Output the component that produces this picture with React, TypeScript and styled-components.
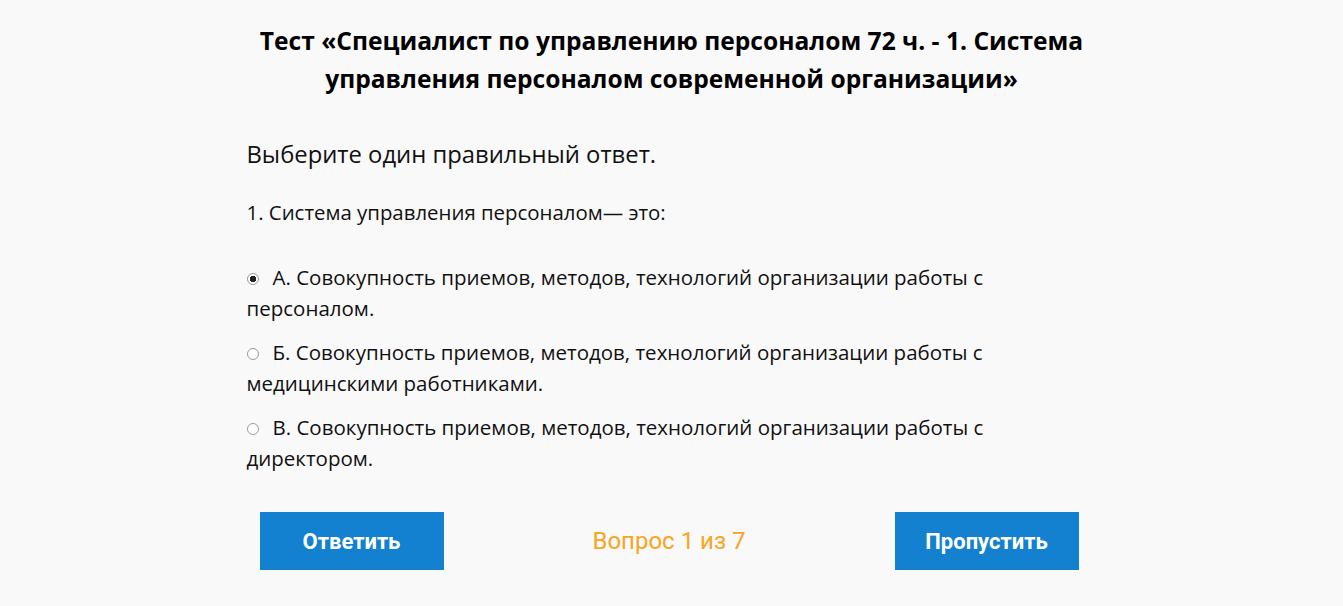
import {useState} from 'react';
import styled, {createGlobalStyle} from 'styled-components';

const GlobalStyle = createGlobalStyle`
  body {
    margin: 0;
    background: #f9f9f9;
    font-family: "Open Sans", "Noto Sans", sans-serif;
    color: #111;
  }
`;

const answers = [
  {id: 'a', text: 'А. Совокупность приемов, методов, технологий организации работы с персоналом.'},
  {id: 'b', text: 'Б. Совокупность приемов, методов, технологий организации работы с медицинскими работниками.'},
  {id: 'c', text: 'В. Совокупность приемов, методов, технологий организации работы с директором.'},
];

function App() {
  const [selected, setSelected] = useState('a');

  return (
    <>
      <GlobalStyle />
      <Wrapper>
        <Title>
          Тест «Специалист по управлению персоналом 72 ч. - 1. Система управления персоналом
          современной организации»
        </Title>
        <Hint>Выберите один правильный ответ.</Hint>
        <Question>1. Система управления персоналом— это:</Question>
        <AnswerList>
          {answers.map(a => (
            <Answer key={a.id} onClick={() => setSelected(a.id)}>
              <Radio $checked={selected === a.id} />
              {a.text}
            </Answer>
          ))}
        </AnswerList>
        <Footer>
          <ActionButton>Ответить</ActionButton>
          <Counter>Вопрос 1 из 7</Counter>
          <ActionButton>Пропустить</ActionButton>
        </Footer>
      </Wrapper>
    </>
  );
}

const Wrapper = styled.div`
  width: 846px;
  margin: 0 auto;
  padding: 22px 4px 0 0;
`;

const Title = styled.h1`
  margin: 0;
  padding: 0 6px 0 10px;
  text-align: center;
  font-size: 24.6px;
  line-height: 38px;
  font-weight: 700;
  color: #000;
`;

const Hint = styled.p`
  margin: 40px 0 0;
  font-size: 23.8px;
  line-height: 32px;
`;

const Question = styled.p`
  margin: 28px 0 0;
  font-size: 20.4px;
  line-height: 28px;
`;

const AnswerList = styled.div`
  margin-top: 36px;
  display: flex;
  flex-direction: column;
  gap: 13px;
`;

const Answer = styled.label`
  display: block;
  font-size: 20.5px;
  line-height: 31px;
  cursor: pointer;
`;

const Radio = styled.span<{$checked: boolean}>`
  display: inline-block;
  box-sizing: border-box;
  width: 12px;
  height: 12px;
  margin: 0 14px 0 0;
  vertical-align: 0;
  border-radius: 50%;
  border: 1px solid #9a9a9a;
  background: ${p => (p.$checked ? 'radial-gradient(circle, #222 0 3px, #fff 3.5px)' : '#fff')};
`;

const Footer = styled.div`
  margin-top: 38px;
  padding: 0 14px 0 13px;
  display: flex;
  align-items: center;
  justify-content: space-between;
`;

const ActionButton = styled.button`
  width: 184px;
  height: 58px;
  border: none;
  background: #1380d0;
  color: #fff;
  font-family: "Roboto", sans-serif;
  font-size: 22px;
  font-weight: 700;
  cursor: pointer;
`;

const Counter = styled.span`
  color: #f5a623;
  font-family: "Roboto", sans-serif;
  font-size: 24px;
`;

export default App;
